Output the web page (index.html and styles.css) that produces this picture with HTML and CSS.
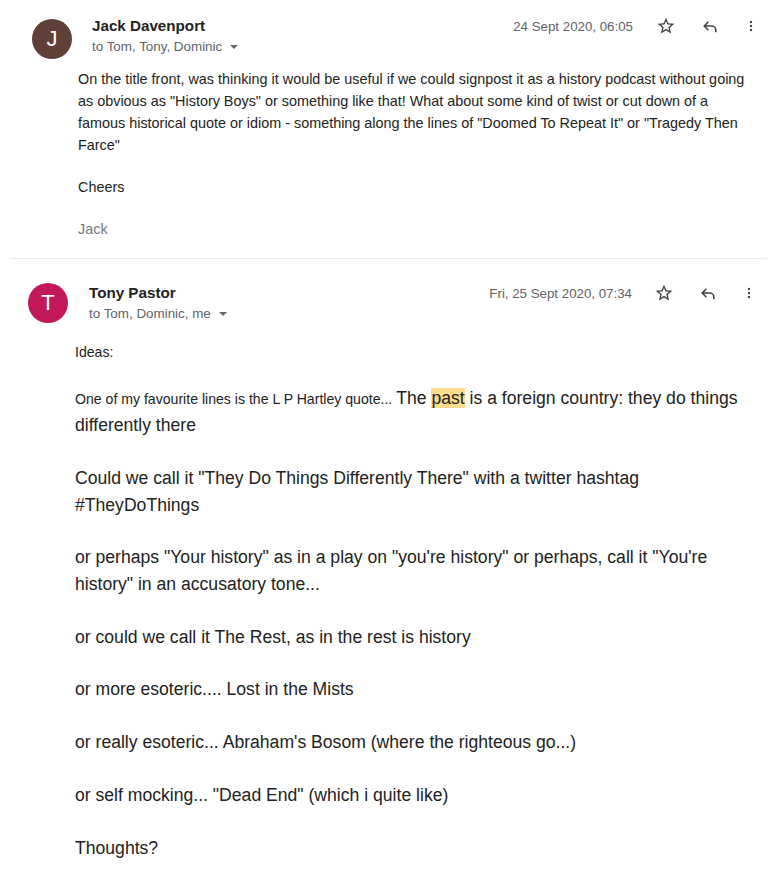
FILE: index.html
```html
<!DOCTYPE html>
<html>
<head>
<meta charset="utf-8">
<link rel="stylesheet" href="styles.css">
</head>
<body>
<div class="thread">
  <div class="msg msg1">
    <div class="avatar av-j">J</div>
    <div class="content">
      <div class="head">
        <div class="who">
          <div class="name">Jack Davenport</div>
          <div class="to">to Tom, Tony, Dominic <span class="caret"></span></div>
        </div>
        <div class="meta">
          <span class="date">24 Sept 2020, 06:05</span>
          <svg class="ic star" viewBox="0 0 24 24"><path d="M22 9.24l-7.19-.62L12 2 9.19 8.63 2 9.24l5.46 4.73L5.82 21 12 17.270 18.18 21l-1.630-7.03L22 9.24zM12 15.4l-3.76 2.27 1-4.28-3.32-2.88 4.38-.38L12 6.1l1.71 4.04 4.38.38-3.32 2.88 1 4.28L12 15.4z"/></svg>
          <svg class="ic reply" viewBox="0 0 24 24"><path d="M9.5 7.5L5 12l4.5 4.5M5.5 12H14a5 5 0 0 1 5 5v1.5"/></svg>
          <svg class="ic dots" viewBox="0 0 24 24"><circle cx="12" cy="6" r="1.8"/><circle cx="12" cy="12" r="1.8"/><circle cx="12" cy="18" r="1.8"/></svg>
        </div>
      </div>
      <div class="body small">
        <p>On the title front, was thinking it would be useful if we could signpost it as a history podcast without going as obvious as "History Boys" or something like that! What about some kind of twist or cut down of a famous historical quote or idiom - something along the lines of "Doomed To Repeat It" or "Tragedy Then Farce"</p>
        <p>Cheers</p>
        <p class="sig">Jack</p>
      </div>
    </div>
  </div>
  <div class="sep"></div>
  <div class="msg msg2">
    <div class="avatar av-t">T</div>
    <div class="content">
      <div class="head">
        <div class="who">
          <div class="name">Tony Pastor</div>
          <div class="to">to Tom, Dominic, me <span class="caret"></span></div>
        </div>
        <div class="meta">
          <span class="date">Fri, 25 Sept 2020, 07:34</span>
          <svg class="ic star" viewBox="0 0 24 24"><path d="M22 9.24l-7.19-.62L12 2 9.19 8.63 2 9.24l5.46 4.73L5.82 21 12 17.27 18.18 21l-1.63-7.03L22 9.24zM12 15.4l-3.76 2.27 1-4.28-3.32-2.88 4.38-.38L12 6.1l1.71 4.04 4.38.38-3.32 2.88 1 4.28L12 15.4z"/></svg>
          <svg class="ic reply" viewBox="0 0 24 24"><path d="M9.5 7.5L5 12l4.5 4.5M5.5 12H14a5 5 0 0 1 5 5v1.5"/></svg>
          <svg class="ic dots" viewBox="0 0 24 24"><circle cx="12" cy="6" r="1.8"/><circle cx="12" cy="12" r="1.8"/><circle cx="12" cy="18" r="1.8"/></svg>
        </div>
      </div>
      <div class="body body2">
        <p class="sm">Ideas:</p>
        <p class="mixed"><span class="sm">One of my favourite lines is the L P Hartley quote... </span>The <mark>past</mark> is a foreign country: they do things differently there</p>
        <p>Could we call it "They Do Things Differently There" with a twitter hashtag #TheyDoThings</p>
        <p>or perhaps "Your history" as in a play on "you're history" or perhaps, call it "You're history" in an accusatory tone...</p>
        <p>or could we call it The Rest, as in the rest is history</p>
        <p>or more esoteric.... Lost in the Mists</p>
        <p>or really esoteric... Abraham's Bosom (where the righteous go...)</p>
        <p>or self mocking... "Dead End" (which i quite like)</p>
        <p>Thoughts?</p>
      </div>
    </div>
  </div>
</div>
</body>
</html>
```
FILE: styles.css
```css
* { box-sizing: border-box; }
html, body { margin: 0; padding: 0; background: #fff; }
body {
  font-family: "Liberation Sans", Arial, sans-serif;
  color: #222;
  width: 777px;
  height: 872px;
  overflow: hidden;
}
.thread { display: flex; flex-direction: column; }
.msg { display: flex; }
.msg1 { padding: 19px 0 0 32px; }
.msg2 { padding: 24px 0 0 28px; }
.avatar {
  width: 40px; height: 40px; border-radius: 50%;
  color: #fff; font-size: 22px;
  display: flex; align-items: center; justify-content: center;
  flex: none;
}
.av-j { background: #603f36; }
.av-t { background: #c2185b; }
.content { flex: 1; }
.msg1 .content { padding-left: 6px; }
.msg2 .content { padding-left: 7px; }
.head { display: flex; justify-content: space-between; align-items: flex-start; }
.msg1 .head { margin-top: -3px; }
.msg2 .head { margin-top: 0; }
.who { padding-left: 14px; }
.name { font-weight: bold; font-size: 15.2px; color: #222; line-height: 20px; }
.to { font-size: 13.4px; color: #5f6368; line-height: 18px; margin-top: 2px; }
.caret {
  display: inline-block; width: 0; height: 0;
  border-left: 4px solid transparent; border-right: 4px solid transparent;
  border-top: 4px solid #666; vertical-align: middle; margin-left: 4px;
}
.meta { display: flex; align-items: center; height: 20px; }
.msg1 .meta { padding-right: 18px; }
.msg2 .meta { padding-right: 20px; }
.date { font-size: 13.3px; color: #5f6368; margin-right: 23px; }
.msg2 .date { margin-right: 22px; }
.ic { width: 20px; height: 20px; flex: none; }
.star { fill: #444; margin-right: 24px; }
.reply { fill: none; stroke: #444; stroke-width: 2; stroke-linecap: round; stroke-linejoin: round; margin-right: 23px; }
.dots { fill: #444; width: 16px; }
.body { padding-left: 0; }
.small { font-size: 14.4px; line-height: 22px; margin-top: 12px; padding-right: 30px; }
.small p { margin: 0 0 20px; }
.small p.sig { color: #777; margin: 0; }
.sep { height: 1px; background: #e8eaed; margin: 18px 10px 0 10px; }
.body2 { margin-top: 18px; font-size: 17.6px; line-height: 26.4px; color: #222; padding-right: 28px; }
.body2 p { margin: 0 0 26.4px; }
.body2 .sm { font-size: 14.1px; }
.body2 p.sm { line-height: 22px; margin-bottom: 22px; }
.mixed .sm { font-size: 14.1px; }
mark { background: #fddc8b; color: #222; }
```
